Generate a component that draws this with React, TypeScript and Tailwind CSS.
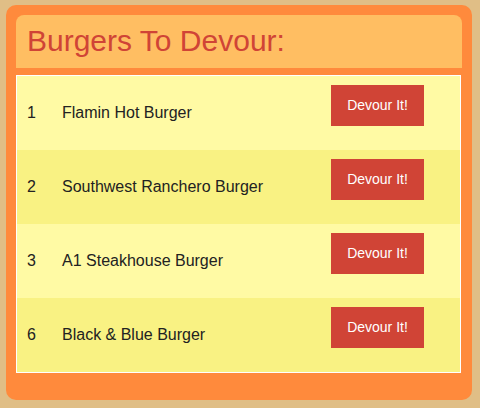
import React from "react";

const burgers = [
  { id: 1, name: "Flamin Hot Burger" },
  { id: 2, name: "Southwest Ranchero Burger" },
  { id: 3, name: "A1 Steakhouse Burger" },
  { id: 6, name: "Black & Blue Burger" },
];

const App = () => {
  return (
    <div className="w-[480px] h-[408px] bg-[#e0be86] pt-[5px] pl-[6px] font-['Liberation_Sans',Arial,sans-serif]">
      <div className="w-[466px] h-[395px] bg-[#ff8a3c] rounded-[10px] p-[10px] flex flex-col">
        {/* header */}
        <div className="h-[53px] bg-[#ffbe62] rounded-t-[8px] flex items-center px-[11px]">
          <h1 className="text-[30px] text-[#d04436] leading-[1.15]">Burgers To Devour:</h1>
        </div>

        {/* list */}
        <div className="mt-[7px] w-[445px] h-[298px] border border-white flex flex-col">
          {burgers.map((burger, index) => (
            <div
              key={burger.id}
              className={`flex-1 flex items-start ${index % 2 === 0 ? "bg-[#fffaa4]" : "bg-[#f9f283]"}`}
            >
              <span className="w-[45px] pl-[10px] pt-[25px] text-[16px] text-[#222]">{burger.id}</span>
              <span className="flex-1 pt-[25px] text-[16px] text-[#222]">{burger.name}</span>
              <button className="mt-[9px] mr-[36px] w-[93px] h-[41px] bg-[#d04436] text-white text-[14px]">
                Devour It!
              </button>
            </div>
          ))}
        </div>
      </div>
    </div>
  );
};

export default App;
